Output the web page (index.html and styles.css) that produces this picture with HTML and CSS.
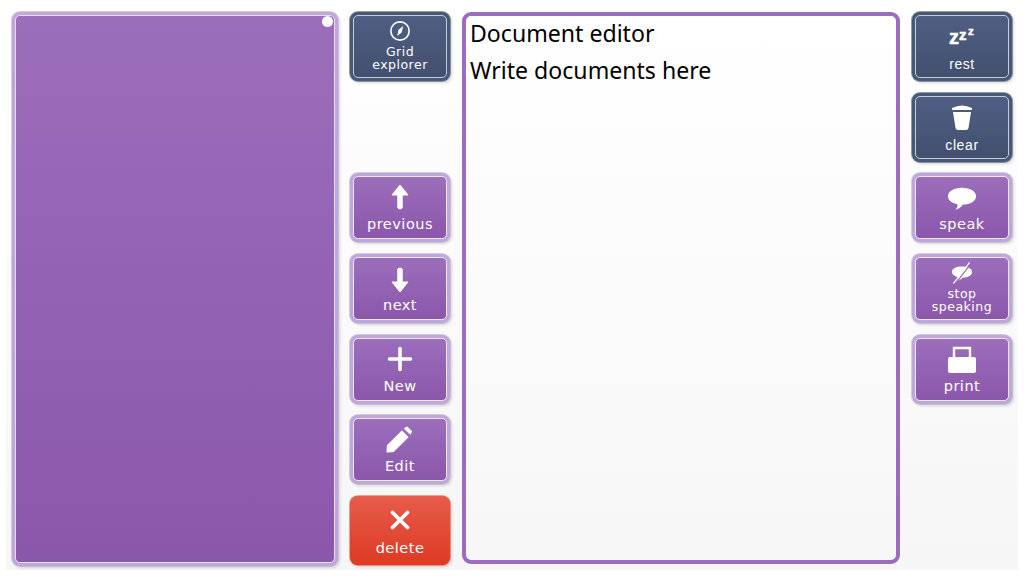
FILE: index.html
```html
<!DOCTYPE html>
<html lang="en">
<head>
    <meta charset="UTF-8">
    <title>Document editor</title>
    <link rel="stylesheet" href="styles.css">
</head>
<body>
    <div class="board">
        <div class="list-panel">
            <div class="list-inner"></div>
            <span class="list-dot"></span>
        </div>

        <div class="btn-col">
            <button class="btn btn-dark"><span class="btn-inner">
                <svg class="icon icon-small" viewBox="0 0 24 24"><circle cx="12" cy="12" r="10" fill="none" stroke="#fff" stroke-width="1.8"/><path d="M15.5 6.5 L13.8 13.5 L9 17.5 L10.4 10.6 Z" fill="#fff"/></svg>
                <span class="label label-two">Grid<br>explorer</span>
            </span></button>
            <div class="btn-space"></div>
            <button class="btn"><span class="btn-inner">
                <svg class="icon" viewBox="0 0 30 30"><path d="M15 2 L23 12 L17.2 12 L17.2 25 Q15 27 12.800 25 L12.800 12 L7 12 Z" fill="#fff" stroke="#fff" stroke-linejoin="round"/></svg>
                <span class="label">previous</span>
            </span></button>
            <button class="btn"><span class="btn-inner">
                <svg class="icon" viewBox="0 0 30 30"><path d="M15 28 L23 18 L17.2 18 L17.2 5 Q15 3 12.800 5 L12.800 18 L7 18 Z" fill="#fff" stroke="#fff" stroke-linejoin="round"/></svg>
                <span class="label">next</span>
            </span></button>
            <button class="btn"><span class="btn-inner">
                <svg class="icon" viewBox="0 0 30 30"><path d="M15 3.500 V24.500 M4.500 14 H25.500" fill="none" stroke="#fff" stroke-width="3.600" stroke-linecap="round"/></svg>
                <span class="label">New</span>
            </span></button>
            <button class="btn"><span class="btn-inner">
                <svg class="icon" viewBox="1 0 31 31"><path d="M3 28 L3.500 21 L18.500 6 L25 12.500 L10 27.500 Z" fill="#fff" stroke="#fff" stroke-linejoin="round"/><path d="M20.500 4 L22.500 2 Q23.500 1.300 24.500 2 L28.500 6 Q29.300 7 28.500 8 L27 10 Z" fill="#fff"/></svg>
                <span class="label">Edit</span>
            </span></button>
            <button class="btn btn-red"><span class="btn-inner">
                <svg class="icon" viewBox="0 0 30 30"><path d="M7.500 7.500 L22.500 22.500 M22.500 7.500 L7.500 22.500" fill="none" stroke="#fff" stroke-width="3.800" stroke-linecap="round"/></svg>
                <span class="label">delete</span>
            </span></button>
        </div>

        <div class="editor">
            <p>Document editor</p>
            <p>Write documents here</p>
        </div>

        <div class="btn-col">
            <button class="btn btn-dark"><span class="btn-inner">
                <svg class="icon icon-zzz" viewBox="0 0 30 30"><text x="2" y="22" class="zzz z1">z</text><text x="12" y="18" class="zzz z2">z</text><text x="21" y="13" class="zzz z3">z</text></svg>
                <span class="label label-plain">rest</span>
            </span></button>
            <button class="btn btn-dark"><span class="btn-inner">
                <svg class="icon" viewBox="0 0 30 30"><path d="M5 5 Q15 0 25 5 L25 7 L5 7 Z" fill="#fff"/><path d="M6 9 H24 L21.500 25 Q21 27 19 27 H11 Q9 27 8.500 25 Z" fill="#fff"/></svg>
                <span class="label label-plain">clear</span>
            </span></button>
            <button class="btn"><span class="btn-inner">
                <svg class="icon" viewBox="0 0 32 30"><path d="M16 4 C25 4 31 8 31 13 C31 18 25 22 17 22 C15 25 12 27 9 27.500 C11 25.500 11.500 23.500 11 21.500 C5 20.500 1 17 1 13 C1 8 7 4 16 4 Z" fill="#fff"/></svg>
                <span class="label">speak</span>
            </span></button>
            <button class="btn"><span class="btn-inner">
                <svg class="icon icon-small" viewBox="0 0 24 24"><path d="M12 5 C18 5 23 7 23 11 C23 15 18 17 13 17 C11 19 9 20 6 21 C8 19 8 18 7.500 16.500 C3.500 15.500 1 13.500 1 11 C1 7 6 5 12 5 Z" fill="#fff"/><path d="M20 1 L3 23" stroke="#fff" stroke-width="1.400" stroke-linecap="round"/><path d="M21.500 2 L5 23.500" stroke="#9566b6" stroke-width="1.200"/></svg>
                <span class="label label-two">stop<br>speaking</span>
            </span></button>
            <button class="btn"><span class="btn-inner">
                <svg class="icon" viewBox="0 0 30 30"><path d="M7 13 V3 H23 V13" fill="none" stroke="#fff" stroke-width="2.400"/><path d="M3 12 H27 Q29 12 29 14 V26 Q29 28 27 28 H3 Q1 28 1 26 V14 Q1 12 3 12 Z" fill="#fff"/></svg>
                <span class="label">print</span>
            </span></button>
        </div>
    </div>
</body>
</html>
```

FILE: styles.css
```css
:root {
    --ring-purple: #bea8da;
    --ring-dark: #4a5878;
    --ring-red: #e14a33;
    --drop-shadow: 2px 2px 3px rgba(0, 0, 0, 0.15);
}

* {
    box-sizing: border-box;
}

body {
    margin: 0;
    height: 576px;
    padding: 0 6px 6px;
    background-color: #ffffff;
    font-family: "DejaVu Sans", sans-serif;
    overflow: hidden;
}

.board {
    display: grid;
    grid-template-columns: 326px 100px 438px 100px;
    grid-template-rows: minmax(0, 1fr);
    gap: 12px;
    height: 570px;
    padding: 12px 6px 4px;
    background: linear-gradient(#ffffff, #f6f6f6);
}

.list-panel {
    position: relative;
    padding: 3px;
    border-radius: 8px;
    background-color: var(--ring-purple);
    box-shadow: 0 0 0 1px rgba(190, 168, 218, 0.6), var(--drop-shadow);
}

.list-inner {
    height: 100%;
    border: 1px solid #e6def0;
    border-radius: 5px;
    background: linear-gradient(#9b6ebb, #8b57ab);
}

.list-dot {
    position: absolute;
    top: 4px;
    right: 5px;
    width: 11px;
    height: 11px;
    border-radius: 50%;
    background-color: #ffffff;
}

.btn-col {
    display: grid;
    grid-template-rows: repeat(7, 69px);
    row-gap: 11.67px;
}

/* the left column's gap above "previous" takes one row */
.btn-space {
    min-height: 0;
}

.btn {
    display: block;
    width: 100%;
    height: 100%;
    min-height: 0;
    padding: 3px;
    border: none;
    border-radius: 8px;
    background-color: var(--ring-purple);
    box-shadow: 0 0 0 1px rgba(190, 168, 218, 0.6), var(--drop-shadow);
    font-family: inherit;
    color: #ffffff;
}

.btn-inner {
    display: flex;
    flex-direction: column;
    align-items: center;
    justify-content: space-between;
    height: 100%;
    padding: 6px 0 5px;
    border: 1px solid #ece6f3;
    border-radius: 5px;
    background: linear-gradient(#9b6ebb, #8b57ab);
}

.btn-dark {
    background-color: var(--ring-dark);
    box-shadow: 0 0 0 1px rgba(74, 88, 120, 0.6), var(--drop-shadow);
}

.btn-dark .btn-inner {
    border-color: #c7ccd8;
    background: linear-gradient(#4f5e82, #43506f);
}

.btn-red {
    padding: 0;
    background-color: var(--ring-red);
    box-shadow: 0 0 0 1px rgba(225, 74, 51, 0.5), var(--drop-shadow);
}

.btn-red .btn-inner {
    padding: 9px 0 8px;
    border: none;
    border-radius: 8px;
    background: linear-gradient(#e65c4a, #de3a24);
}

.icon {
    display: block;
    width: 30px;
    height: 30px;
}

.icon-small {
    width: 22px;
    height: 22px;
    margin-top: -2px;
}

.icon-zzz {
    overflow: visible;
}

.label {
    font-size: 14.5px;
    line-height: 17px;
    letter-spacing: 0.5px;
    text-align: center;
}

.label-two {
    margin-bottom: 1px;
    font-size: 12.500px;
    line-height: 13px;
}

.label-plain {
    margin-bottom: -1px;
    font-family: "Liberation Sans", sans-serif;
    font-size: 14px;
    letter-spacing: 0.6px;
}

.zzz {
    fill: #ffffff;
    stroke: #ffffff;
    stroke-width: 0.5px;
    font-family: "Liberation Sans", sans-serif;
    font-weight: bold;
}

.z1 {
    font-size: 20px;
}

.z2 {
    font-size: 15px;
}

.z3 {
    font-size: 11.5px;
}

.editor {
    height: 552px;
    padding: 0 4px;
    border: 4px solid #9b6cc0;
    border-radius: 9px;
    background: linear-gradient(#ffffff, #f7f7f7);
    font-family: "Noto Sans", sans-serif;
    font-size: 23.1px;
    line-height: 37px;
    color: #000000;
}

.editor p {
    margin: -1px 0 1px;
}
```
